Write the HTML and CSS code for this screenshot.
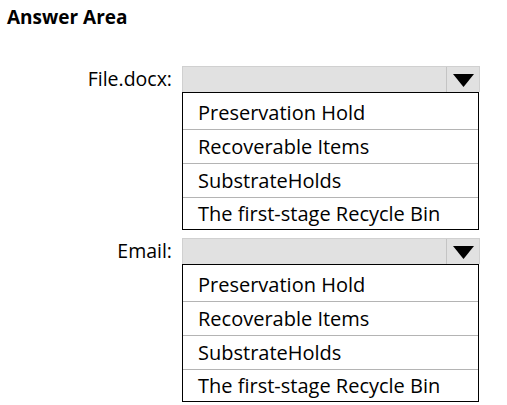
FILE: index.html
```html
<!DOCTYPE html>
<html>
<head>
<meta charset="utf-8">
<link rel="stylesheet" href="styles.css">
</head>
<body>
<div class="title">Answer Area</div>
<div class="form">
  <div class="field">
    <div class="label">File.docx:</div>
    <div class="control">
      <div class="select"><div class="value"></div><div class="arrow"><svg width="21" height="13" viewBox="0 0 21 13"><polygon points="0,0 21,0 10.5,13" fill="#000"/></svg></div></div>
      <div class="list">
        <div class="opt first">Preservation Hold</div>
        <div class="opt">Recoverable Items</div>
        <div class="opt">SubstrateHolds</div>
        <div class="opt last">The first-stage Recycle Bin</div>
      </div>
    </div>
  </div>
  <div class="field">
    <div class="label">Email:</div>
    <div class="control">
      <div class="select"><div class="value"></div><div class="arrow"><svg width="21" height="13" viewBox="0 0 21 13"><polygon points="0,0 21,0 10.5,13" fill="#000"/></svg></div></div>
      <div class="list">
        <div class="opt first">Preservation Hold</div>
        <div class="opt">Recoverable Items</div>
        <div class="opt">SubstrateHolds</div>
        <div class="opt last">The first-stage Recycle Bin</div>
      </div>
    </div>
  </div>
</div>
</body>
</html>
```
FILE: styles.css
```css
html, body {
  margin: 0;
  padding: 0;
  background: #fff;
  color: #000;
  font-family: "Open Sans", "Noto Sans", sans-serif;
}
.title {
  font-weight: 700;
  font-size: 19px;
  line-height: 24px;
  padding: 5px 0 0 7px;
}
.form {
  padding-top: 37px;
  display: flex;
  flex-direction: column;
  gap: 8px;
}
.field {
  display: grid;
  grid-template-columns: 172px 298px;
  column-gap: 10px;
  align-items: start;
}
.label {
  text-align: right;
  font-size: 19.5px;
  line-height: 26px;
}
.select {
  height: 26px;
  display: flex;
  background: #e1e1e1;
  border: 1px solid #d0d0d0;
  border-bottom: none;
  box-sizing: border-box;
}
.value {
  flex: 1;
}
.arrow {
  width: 32px;
  border-left: 1px solid #c4c4c4;
  display: flex;
  align-items: center;
  justify-content: center;
  padding-top: 1px;
}
.list {
  border: 1px solid #000;
  width: 297px;
  box-sizing: border-box;
}
.opt {
  font-size: 20px;
  padding-left: 15px;
  height: 33px;
  line-height: 33px;
  border-bottom: 1px solid #b4b4b4;
}
.opt.first {
  height: 36px;
  line-height: 40px;
}
.opt.last {
  border-bottom: none;
  height: 31px;
  line-height: 31px;
}
```
